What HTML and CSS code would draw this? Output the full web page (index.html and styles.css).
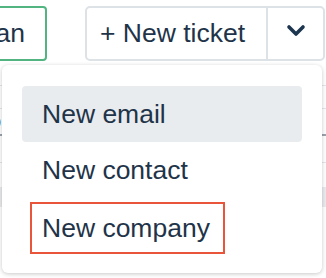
FILE: index.html
```html
<!DOCTYPE html>
<html>
<head>
<meta charset="utf-8">
<link rel="stylesheet" href="styles.css">
</head>
<body>
<div class="page">
  <div class="toolbar">
    <button class="btn-green">Plan</button>
    <div class="split">
      <button class="split-main">+ New ticket</button>
      <button class="split-toggle" aria-label="More">
        <svg width="20" height="14" viewBox="0 0 20 14"><path d="M3 3 L10 10 L17 3" fill="none" stroke="#1d3650" stroke-width="3.6" stroke-linecap="round" stroke-linejoin="round"/></svg>
      </button>
    </div>
  </div>
  <div class="bg">
    <div class="bg-line l1"></div>
    <div class="bg-line l2"></div>
    <div class="bg-row"><span class="bg-glyph">o</span></div>
    <div class="bg-line l3"></div>
    <div class="bg-band"></div>
  </div>
  <div class="menu">
    <div class="item active">New email</div>
    <div class="item">New contact</div>
    <div class="item focus"><span class="focus-box">New company</span></div>
  </div>
</div>
</body>
</html>
```
FILE: styles.css
```css
html, body {
  margin: 0;
  padding: 0;
  background: #fff;
}
.page {
  position: relative;
  width: 326px;
  height: 278px;
  overflow: hidden;
  font-family: "Liberation Sans", Arial, sans-serif;
  color: #1f3449;
}
.toolbar {
  display: flex;
  align-items: flex-start;
  padding-top: 6px;
  height: 55px;
}
button {
  font-family: inherit;
  font-size: 26.5px;
  color: #1f3449;
  background: #fff;
  cursor: pointer;
}
.btn-green {
  box-sizing: border-box;
  margin-left: -50px;
  width: 97px;
  height: 55px;
  border: 2px solid #52b480;
  border-radius: 4px;
  padding: 0 20px 0 0;
  text-align: right;
}
.split {
  box-sizing: border-box;
  display: flex;
  margin-left: 38px;
  width: 240px;
  height: 55px;
  border: 2px solid #dde2e7;
  border-radius: 5px;
}
.split-main {
  border: 0;
  background: transparent;
  padding: 0 0 0 13px;
  width: 181px;
  text-align: left;
  border-right: 2px solid #dde2e7;
}
.split-toggle {
  border: 0;
  background: transparent;
  flex: 1;
  display: flex;
  align-items: center;
  justify-content: center;
  padding: 0 0 6px 0;
}
.bg {
  display: flex;
  flex-direction: column;
}
.bg-line {
  height: 1px;
  background: #e3e6ea;
}
.l1 { margin-top: 24px; }
.l2 { margin-top: 22px; }
.bg-row {
  height: 25px;
  border-bottom: 2px solid #9aa3ad;
  font-size: 20px;
  line-height: 24px;
}
.bg-glyph {
  margin-left: -10px;
}
.l3 { margin-top: 26px; }
.bg-band {
  margin-top: 24px;
  height: 20px;
  background: #e9ebee;
}
.menu {
  position: absolute;
  left: 2px;
  top: 65px;
  width: 320px;
  height: 208px;
  box-sizing: border-box;
  background: #fff;
  border-radius: 6px;
  box-shadow: 0 1px 4px rgba(0, 0, 0, 0.22);
  padding: 21px 20px 19px;
  display: flex;
  flex-direction: column;
}
.item {
  height: 56px;
  line-height: 56px;
  padding-left: 20px;
  font-size: 26.5px;
  border-radius: 4px;
  white-space: nowrap;
}
.item.active {
  background: #e9ecef;
}
.item.focus {
  display: flex;
  align-items: flex-end;
  padding-left: 8px;
}
.focus-box {
  box-sizing: border-box;
  height: 52px;
  line-height: 48px;
  border: 2px solid #e8553a;
  padding: 0 13px 0 10px;
}
```
